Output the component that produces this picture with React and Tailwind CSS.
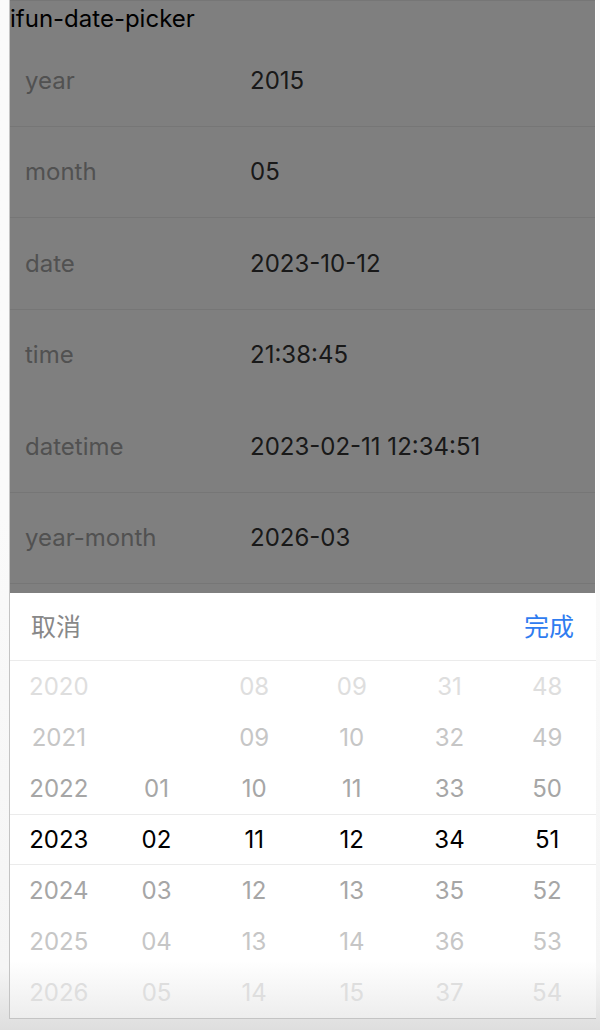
import { useState } from "react";

const ROWS = [
    { label: "year", value: "2015" },
    { label: "month", value: "05" },
    { label: "date", value: "2023-10-12" },
    { label: "time", value: "21:38:45", noBorder: true },
    { label: "datetime", value: "2023-02-11 12:34:51" },
    { label: "year-month", value: "2026-03" },
];

const COLUMNS = [
    { name: "year", min: 1970, max: 2050, value: 2023 },
    { name: "month", min: 1, max: 12, value: 2 },
    { name: "day", min: 1, max: 28, value: 11 },
    { name: "hour", min: 0, max: 23, value: 12 },
    { name: "minute", min: 0, max: 59, value: 34 },
    { name: "second", min: 0, max: 59, value: 51 },
];

const OFFSETS = [-3, -2, -1, 0, 1, 2, 3];

// text fades out with the distance from the selected row
const SHADES = ["text-black", "text-[#a6a6a6]", "text-[#c6c6c6]", "text-[#dedede]"];

const pad = (n) => String(n).padStart(2, "0");

function FormRow({ label, value, noBorder }) {
    return (
        <div
            className={`flex items-center border-b px-[15px] odd:h-[91px] even:h-[92px] ${
                noBorder ? "border-transparent" : "border-[#ededed]"
            }`}
        >
            <span id={label} className="w-[225px] shrink-0 text-[#a3a3a3]">
                {label}
            </span>
            <button
                type="button"
                aria-describedby={label}
                className="flex-1 text-left text-[#333]"
            >
                {value}
            </button>
        </div>
    );
}

function Wheel({ column, value, onChange }) {
    return (
        <ul aria-label={column.name} className="text-center">
            {OFFSETS.map((offset) => {
                const n = value + offset;
                const valid = n >= column.min && n <= column.max;

                return (
                    <li
                        key={offset}
                        className={`h-[51px] ${
                            offset === 0 ? "border-y border-[#ebebeb]" : ""
                        }`}
                    >
                        {valid && (
                            <button
                                type="button"
                                onClick={() => onChange(n)}
                                className={`h-full w-full ${
                                    SHADES[Math.abs(offset)]
                                }`}
                            >
                                {pad(n)}
                            </button>
                        )}
                    </li>
                );
            })}
        </ul>
    );
}

export default function App() {
    const [values, setValues] = useState(COLUMNS.map((c) => c.value));

    const handleChange = (index, n) => {
        setValues((prev) => prev.map((v, i) => (i === index ? n : v)));
    };

    return (
        <div className="min-h-screen bg-linear-to-b from-[#fafafa] from-50% via-[#f5f5f5] via-94% to-[#dedede] pr-1 pb-[11px] pl-[9px] font-['Inter','Noto_Sans_CJK_SC',sans-serif] text-[24px] leading-8">
            <div className="border-b border-l border-[#c4c4c4] bg-white">
                <main className="relative mr-px bg-white pb-[9px]">
                    <h1 className="border-t border-[#ededed] pt-[2px] text-black">
                        ifun-date-picker
                    </h1>
                    {ROWS.map((row) => (
                        <FormRow key={row.label} {...row} />
                    ))}
                    <div className="absolute inset-0 bg-black/50" />
                </main>

                <section aria-label="datetime picker">
                    <div className="flex h-[68px] items-center justify-between border-b border-[#ebebeb] pr-[22px] pl-[21px] text-[25px]">
                        <button type="button" className="text-[#888]">
                            取消
                        </button>
                        <button type="button" className="text-[#2f7cf0]">
                            完成
                        </button>
                    </div>
                    <div className="grid grid-cols-6 bg-linear-to-b from-white from-84% to-[#ededed]">
                        {COLUMNS.map((column, i) => (
                            <Wheel
                                key={column.name}
                                column={column}
                                value={values[i]}
                                onChange={(n) => handleChange(i, n)}
                            />
                        ))}
                    </div>
                </section>
            </div>
        </div>
    );
}
